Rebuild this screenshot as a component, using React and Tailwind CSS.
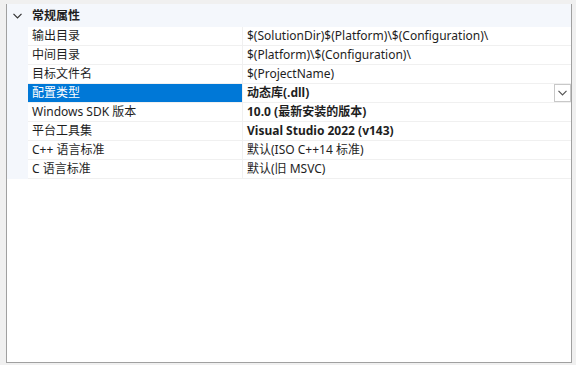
import React from 'react';

const rows = [
  { name: '输出目录', value: '$(SolutionDir)$(Platform)\\$(Configuration)\\' },
  { name: '中间目录', value: '$(Platform)\\$(Configuration)\\' },
  { name: '目标文件名', value: '$(ProjectName)' },
  { name: '配置类型', value: '动态库(.dll)', bold: true, selected: true },
  { name: 'Windows SDK 版本', value: '10.0 (最新安装的版本)', bold: true },
  { name: '平台工具集', value: 'Visual Studio 2022 (v143)', bold: true },
  { name: 'C++ 语言标准', value: '默认(ISO C++14 标准)' },
  { name: 'C 语言标准', value: '默认(旧 MSVC)' },
];

function Chevron({ className }) {
  return (
    <svg className={className} width="9" height="6" viewBox="0 0 9 6" fill="none" stroke="currentColor" strokeWidth="1.2">
      <path d="M0.5 0.8 L4.5 4.8 L8.5 0.8" />
    </svg>
  );
}

export default function App() {
  return (
    <div
      className="w-[576px] h-[365px] bg-[#f0f0f0] pl-[6px] pr-[4px] pt-[4px] pb-[2px] text-[12px] text-[#1e1e1e]"
      style={{ fontFamily: '"Noto Sans", "Noto Sans CJK SC", sans-serif' }}
    >
      <div className="h-full bg-white border-l border-r border-b border-[#a0a0a0] flex flex-col">
        {/* 分类标题 */}
        <div className="h-[23px] bg-[#f4f7fc] flex items-center">
          <div className="w-[21px] flex justify-center">
            <Chevron className="text-[#333]" />
          </div>
          <span className="font-bold pl-[4px] leading-none">常规属性</span>
        </div>
        <div className="flex">
          <div className="w-[21px] bg-[#f4f7fc]" />
          <div className="flex-1">
            {rows.map((r) => (
              <div key={r.name} className="flex h-[19px] border-b border-[#f0f0f0]">
                <div
                  className={`w-[215px] flex items-center pl-[4px] border-r border-[#f0f0f0] leading-none ${
                    r.selected ? 'bg-[#0078d7] text-white' : ''
                  }`}
                >
                  {r.name}
                </div>
                <div className={`flex-1 flex items-center pl-[4px] leading-none ${r.bold ? 'font-bold' : ''}`}>
                  <span className="flex-1">{r.value}</span>
                  {r.selected && (
                    <div className="w-[17px] h-[18px] border border-[#c8c8c8] bg-white flex items-center justify-center mr-[0px]">
                      <Chevron className="text-[#555]" />
                    </div>
                  )}
                </div>
              </div>
            ))}
          </div>
        </div>
        <div className="flex-1" />
      </div>
    </div>
  );
}
